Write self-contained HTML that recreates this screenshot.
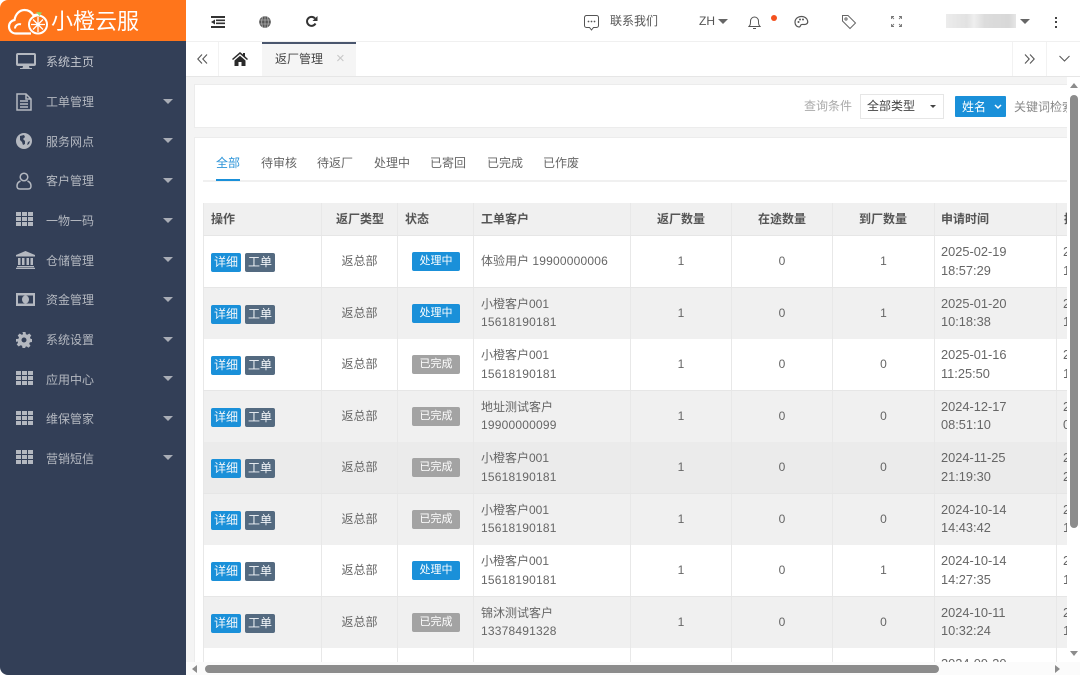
<!DOCTYPE html>
<html lang="zh"><head><meta charset="utf-8"><title>返厂管理</title>
<style>
*{box-sizing:border-box}
html,body{margin:0;padding:0;width:1080px;height:675px;overflow:hidden;background:#fff}
body{position:relative;font-family:"Liberation Sans","Noto Sans CJK SC",sans-serif;font-size:12px;color:#666}
.a{position:absolute}
#side{left:0;top:41px;width:186px;height:634px;background:#333f57;border-bottom-left-radius:8px}
#logo{left:0;top:0;width:186px;height:41px;background:#ff751b;border-top-left-radius:8px}
#logo b{position:absolute;left:51px;top:7px;font-weight:400;font-size:22px;line-height:30px;color:#fff;white-space:nowrap}
.m{position:absolute;left:46px;color:#b4b8c0;font-size:12px;line-height:16px;white-space:nowrap}
.car{position:absolute;left:163px;width:0;height:0;border-left:5px solid transparent;border-right:5px solid transparent;border-top:5px solid #a9adb6}
.ic{position:absolute;left:16px}
.t{position:absolute;white-space:nowrap;line-height:16px}
#main{left:186px;top:77px;width:894px;height:598px;background:#f4f4f4}
.card{position:absolute;background:#fff;border:1px solid #ececec}
.row{position:absolute;left:203px;width:864px;height:52px;border-bottom:1px solid #e6e6e6;overflow:hidden}
.c{position:absolute;top:0;height:100%;border-left:1px solid #e8e8e8}
.c0{left:0;width:118px}.c1{left:118px;width:76px}.c2{left:194px;width:76px}.c3{left:270px;width:157px}
.c4{left:427px;width:101px}.c5{left:528px;width:101px}.c6{left:629px;width:102px}.c7{left:731px;width:122px}.c8{left:853px;width:20px}
.b{position:absolute;height:19px;width:30px;border-radius:2px;color:#f4f7fa;text-align:center;font-size:12px;line-height:18px;top:17px}
.b1{left:7px;background:#1a90d9}.b2{left:41px;background:#546a80}
.s{position:absolute;left:209px;top:16px;width:48px;height:19px;border-radius:2px;color:#fff;text-align:center;font-size:11px;line-height:19px}
.s1{background:#1a90d9}.s2{background:#a3a3a3}
.ct{position:absolute;left:0;width:100%;text-align:center;top:17px;line-height:17px;font-size:12px}
.l2{position:absolute;line-height:18.5px;font-size:12px;top:7px;left:7px;white-space:nowrap}
.n{letter-spacing:.2px}
.tm{font-size:12.8px;left:6px}
.h{font-weight:700;font-size:12px;color:#555;top:8px;left:7px}
.tab{position:absolute;top:155px;font-size:12px;line-height:16px;color:#666;white-space:nowrap}
</style></head><body>

<div class="a" id="main"></div>

<!-- top header -->
<div class="a" style="left:186px;top:0;width:894px;height:42px;background:#fff;border-bottom:1px solid #f0f0f0"></div>
<svg class="a" style="left:211px;top:16px" width="14" height="12" viewBox="0 0 14 12"><path d="M0 0h14v2H0zM5 3.500h9v1.600H5zM5 6.500h9v1.600H5zM0 10h14v2H0zM4 3.500v5L0 6z" fill="#333"/></svg>
<svg class="a" style="left:259px;top:16px" width="12" height="12" viewBox="0 0 12 12"><circle cx="6" cy="6" r="5.800" fill="#555"/><path d="M0 4h12M0 8h12M6 0v12M3.500 1Q2 6 3.500 11M8.500 1Q10 6 8.500 11" stroke="#ccc" stroke-width=".6" fill="none"/></svg>
<svg class="a" style="left:305px;top:15px" width="13" height="13" viewBox="0 0 13 13"><path d="M10.500 8.500A4.500 4.500 0 1 1 10 3.500" fill="none" stroke="#333" stroke-width="2"/><path d="M12.500 1v5h-5z" fill="#333"/></svg>
<svg class="a" style="left:583px;top:14px" width="17" height="17" viewBox="0 0 17 17"><path d="M3.500 1.500h10a2 2 0 0 1 2 2v8a2 2 0 0 1-2 2h-3L8.500 16l-2-2.500h-3a2 2 0 0 1-2-2v-8a2 2 0 0 1 2-2z" fill="none" stroke="#555" stroke-width="1"/><circle cx="5.500" cy="7.500" r=".9" fill="#555"/><circle cx="8.500" cy="7.500" r=".9" fill="#555"/><circle cx="11.500" cy="7.500" r=".9" fill="#555"/></svg>
<div class="t" style="left:610px;top:13px;color:#555">联系我们</div>
<div class="t" style="left:699px;top:13px;color:#555">ZH</div>
<div class="a" style="left:718px;top:19px;border-left:5px solid transparent;border-right:5px solid transparent;border-top:5px solid #666"></div>
<svg class="a" style="left:748px;top:15px" width="13" height="15" viewBox="0 0 13 15"><path d="M1 11.500c1.500-1.500 1.500-3 1.500-5.500a4 4 0 0 1 8 0c0 2.500 0 4 1.500 5.500zM5 13.500h3" fill="none" stroke="#555" stroke-width="1"/></svg>
<div class="a" style="left:771px;top:15px;width:6px;height:6px;border-radius:50%;background:#f4511e"></div>
<svg class="a" style="left:794px;top:15px" width="15" height="14" viewBox="0 0 15 14"><path d="M7.500 1.500C3.500 1.500 1 4.200 1 7.300c0 2.800 2 4.700 4 4.700 1.500 0 1.200-1.500 2-2.200 1-.9 3 .2 5-.6 1.500-.6 2-2 1.500-3.700-.7-2.300-3-4-5.500-4z" fill="none" stroke="#555" stroke-width="1.200"/><circle cx="4.500" cy="7" r="1" fill="#555"/><circle cx="6" cy="4.500" r="1" fill="#555"/><circle cx="9" cy="4.500" r="1" fill="#555"/></svg>
<svg class="a" style="left:841px;top:14px" width="16" height="16" viewBox="0 0 16 16"><path d="M1.500 1.500h5.500l7.500 7.500-5.500 5.500L1.500 7z" fill="none" stroke="#666" stroke-width="1"/><circle cx="5" cy="5" r="1.100" fill="none" stroke="#666"/></svg>
<svg class="a" style="left:891px;top:16px" width="11" height="11" viewBox="0 0 11 11"><path d="M.5 3V.5H3M8 .5h2.500V3M.5 8v2.500H3M8 10.500h2.500V8M1 1l2 2M10 1L8 3M1 10l2-2M10 10L8 8" stroke="#777" stroke-width=".9" fill="none"/></svg>
<div class="a" style="left:946px;top:14px;width:70px;height:14px;background:linear-gradient(90deg,#ececec,#e2e2e2 30%,#efefef 40%,#dcdcdc 55%,#d8d8d8 90%,#e6e6e6)"></div>
<div class="a" style="left:1020px;top:19px;border-left:5px solid transparent;border-right:5px solid transparent;border-top:5px solid #666"></div>
<div class="a" style="left:1055px;top:17px;width:2px;height:2px;background:#444;box-shadow:0 4px 0 #444,0 9px 0 #444"></div>

<!-- tab bar -->
<div class="a" style="left:186px;top:42px;width:894px;height:35px;background:#fff;border-bottom:1px solid #e6e6e6"></div>
<div class="a" style="left:218px;top:42px;width:1px;height:34px;background:#f2f2f2"></div>
<div class="a" style="left:1012px;top:42px;width:1px;height:34px;background:#f2f2f2"></div>
<div class="a" style="left:1046px;top:42px;width:1px;height:34px;background:#f2f2f2"></div>
<svg class="a" style="left:197px;top:54px" width="11" height="10" viewBox="0 0 11 10"><path d="M5 .5L.8 5 5 9.500M10 .5L5.800 5 10 9.500" fill="none" stroke="#555" stroke-width="1.100"/></svg>
<svg class="a" style="left:232px;top:52px" width="16" height="14" viewBox="0 0 16 14"><path d="M8 0L0 7l1 1 7-6 7 6 1-1-3-2.700V1h-2v1.500zM2.500 8.500L8 3.700l5.500 4.800V14H9.500V10h-3v4h-4z" fill="#2b2b2b"/></svg>
<div class="a" style="left:262px;top:42px;width:94px;height:34px;background:#f5f5f5;border-top:2px solid #4a566e"></div>
<div class="t" style="left:275px;top:51px;color:#444">返厂管理</div>
<div class="t" style="left:336px;top:51px;color:#c8c8c8;font-size:15px">×</div>
<svg class="a" style="left:1024px;top:54px" width="11" height="10" viewBox="0 0 11 10"><path d="M1 .5L5.200 5 1 9.500M6 .5L10.200 5 6 9.500" fill="none" stroke="#555" stroke-width="1.100"/></svg>
<svg class="a" style="left:1059px;top:55px" width="11" height="7" viewBox="0 0 11 7"><path d="M.5 1l5 5 5-5" fill="none" stroke="#555" stroke-width="1"/></svg>

<!-- search card -->
<div class="card" style="left:194px;top:84px;width:880px;height:44px"></div>
<div class="t" style="left:804px;top:98px;color:#aaa">查询条件</div>
<div class="a" style="left:860px;top:94px;width:84px;height:25px;background:#fff;border:1px solid #e6e6e6"></div>
<div class="t" style="left:867px;top:98px;color:#444">全部类型</div>
<div class="a" style="left:930px;top:105px;border-left:3.500px solid transparent;border-right:3.500px solid transparent;border-top:3.500px solid #444"></div>
<div class="a" style="left:955px;top:96px;width:51px;height:21px;background:#1a90d9;border-radius:1px"></div>
<div class="t" style="left:962px;top:99px;color:#fff">姓名</div>
<svg class="a" style="left:994px;top:104px" width="8" height="6" viewBox="0 0 8 6"><path d="M1 1l3 3 3-3" fill="none" stroke="#fff" stroke-width="1.500"/></svg>
<div class="t" style="left:1014px;top:99px;color:#888;width:53px;overflow:hidden">关键词检索</div>

<!-- table card -->
<div class="card" style="left:194px;top:137px;width:880px;height:540px"></div>
<div class="tab" style="left:216px;color:#2a93d8">全部</div>
<div class="tab" style="left:261px">待审核</div>
<div class="tab" style="left:317px">待返厂</div>
<div class="tab" style="left:374px">处理中</div>
<div class="tab" style="left:430px">已寄回</div>
<div class="tab" style="left:487px">已完成</div>
<div class="tab" style="left:543px">已作废</div>
<div class="a" style="left:203px;top:180px;width:864px;height:2px;background:#f0f0f0"></div>
<div class="a" style="left:216px;top:179px;width:24px;height:2px;background:#1a90d9"></div>

<!-- table head -->
<div class="row" style="top:203px;height:33px;background:#f0f0f0">
<div class="c c0"><div class="t h">操作</div></div>
<div class="c c1"><div class="t h" style="left:14px">返厂类型</div></div>
<div class="c c2"><div class="t h">状态</div></div>
<div class="c c3"><div class="t h">工单客户</div></div>
<div class="c c4"><div class="t h" style="left:26px">返厂数量</div></div>
<div class="c c5"><div class="t h" style="left:26px">在途数量</div></div>
<div class="c c6"><div class="t h" style="left:26px">到厂数量</div></div>
<div class="c c7"><div class="t h" style="left:6px">申请时间</div></div>
<div class="c c8"><div class="t h">提</div></div>
</div>

<!-- rows -->
<div class="row" style="top:236px;background:#fff"><div class="c c0"><div class="b b1">详细</div><div class="b b2">工单</div></div><div class="c c1"><div class="ct">返总部</div></div><div class="c c2"></div><div class="s s1">处理中</div><div class="c c3"><div class="l2" style="top:17px;line-height:17px">体验用户 <span class="n">19900000006</span></div></div><div class="c c4"><div class="ct">1</div></div><div class="c c5"><div class="ct">0</div></div><div class="c c6"><div class="ct">1</div></div><div class="c c7"><div class="l2 tm">2025-02-19<br>18:57:29</div></div><div class="c c8"><div class="l2 tm">2025<br>18</div></div></div>

<div class="row" style="top:287.500px;background:#f0f0f0"><div class="c c0"><div class="b b1">详细</div><div class="b b2">工单</div></div><div class="c c1"><div class="ct">返总部</div></div><div class="c c2"></div><div class="s s1">处理中</div><div class="c c3"><div class="l2">小橙客户001<br><span class="n">15618190181</span></div></div><div class="c c4"><div class="ct">1</div></div><div class="c c5"><div class="ct">0</div></div><div class="c c6"><div class="ct">1</div></div><div class="c c7"><div class="l2 tm">2025-01-20<br>10:18:38</div></div><div class="c c8"><div class="l2 tm">2025<br>10</div></div></div>

<div class="row" style="top:339px;background:#fff"><div class="c c0"><div class="b b1">详细</div><div class="b b2">工单</div></div><div class="c c1"><div class="ct">返总部</div></div><div class="c c2"></div><div class="s s2">已完成</div><div class="c c3"><div class="l2">小橙客户001<br><span class="n">15618190181</span></div></div><div class="c c4"><div class="ct">1</div></div><div class="c c5"><div class="ct">0</div></div><div class="c c6"><div class="ct">0</div></div><div class="c c7"><div class="l2 tm">2025-01-16<br>11:25:50</div></div><div class="c c8"><div class="l2 tm">2025<br>11</div></div></div>

<div class="row" style="top:390.500px;background:#f0f0f0"><div class="c c0"><div class="b b1">详细</div><div class="b b2">工单</div></div><div class="c c1"><div class="ct">返总部</div></div><div class="c c2"></div><div class="s s2">已完成</div><div class="c c3"><div class="l2">地址测试客户<br><span class="n">19900000099</span></div></div><div class="c c4"><div class="ct">1</div></div><div class="c c5"><div class="ct">0</div></div><div class="c c6"><div class="ct">0</div></div><div class="c c7"><div class="l2 tm">2024-12-17<br>08:51:10</div></div><div class="c c8"><div class="l2 tm">2024<br>08</div></div></div>

<div class="row" style="top:442px;background:#ebebeb"><div class="c c0"><div class="b b1">详细</div><div class="b b2">工单</div></div><div class="c c1"><div class="ct">返总部</div></div><div class="c c2"></div><div class="s s2">已完成</div><div class="c c3"><div class="l2">小橙客户001<br><span class="n">15618190181</span></div></div><div class="c c4"><div class="ct">1</div></div><div class="c c5"><div class="ct">0</div></div><div class="c c6"><div class="ct">0</div></div><div class="c c7"><div class="l2 tm">2024-11-25<br>21:19:30</div></div><div class="c c8"><div class="l2 tm">2024<br>21</div></div></div>

<div class="row" style="top:493.500px;background:#f0f0f0"><div class="c c0"><div class="b b1">详细</div><div class="b b2">工单</div></div><div class="c c1"><div class="ct">返总部</div></div><div class="c c2"></div><div class="s s2">已完成</div><div class="c c3"><div class="l2">小橙客户001<br><span class="n">15618190181</span></div></div><div class="c c4"><div class="ct">1</div></div><div class="c c5"><div class="ct">0</div></div><div class="c c6"><div class="ct">0</div></div><div class="c c7"><div class="l2 tm">2024-10-14<br>14:43:42</div></div><div class="c c8"><div class="l2 tm">2024<br>14</div></div></div>

<div class="row" style="top:545px;background:#fff"><div class="c c0"><div class="b b1">详细</div><div class="b b2">工单</div></div><div class="c c1"><div class="ct">返总部</div></div><div class="c c2"></div><div class="s s1">处理中</div><div class="c c3"><div class="l2">小橙客户001<br><span class="n">15618190181</span></div></div><div class="c c4"><div class="ct">1</div></div><div class="c c5"><div class="ct">0</div></div><div class="c c6"><div class="ct">1</div></div><div class="c c7"><div class="l2 tm">2024-10-14<br>14:27:35</div></div><div class="c c8"><div class="l2 tm">2024<br>14</div></div></div>

<div class="row" style="top:596.500px;background:#f0f0f0"><div class="c c0"><div class="b b1">详细</div><div class="b b2">工单</div></div><div class="c c1"><div class="ct">返总部</div></div><div class="c c2"></div><div class="s s2">已完成</div><div class="c c3"><div class="l2">锦沐测试客户<br><span class="n">13378491328</span></div></div><div class="c c4"><div class="ct">1</div></div><div class="c c5"><div class="ct">0</div></div><div class="c c6"><div class="ct">0</div></div><div class="c c7"><div class="l2 tm">2024-10-11<br>10:32:24</div></div><div class="c c8"><div class="l2 tm">2024<br>10</div></div></div>

<div class="row" style="top:648px;height:16px;background:#fff;border:0"><div class="c c0"></div><div class="c c1"></div><div class="c c2"></div><div class="c c3"></div><div class="c c4"></div><div class="c c5"></div><div class="c c6"></div><div class="c c7"><div class="l2 tm">2024-09-30</div></div><div class="c c8"></div></div>

<!-- scrollbars -->
<div class="a" style="left:1067px;top:77px;width:13px;height:598px;background:#fff"></div>
<div class="a" style="left:186px;top:662px;width:894px;height:13px;background:#fbfbfb"></div>
<div class="a" style="left:1070px;top:95px;width:8px;height:433px;background:#8c8c8c;border-radius:4px"></div>
<div class="a" style="left:1070px;top:83px;border-left:4px solid transparent;border-right:4px solid transparent;border-bottom:5px solid #8c8c8c"></div>
<div class="a" style="left:1070px;top:651px;border-left:4px solid transparent;border-right:4px solid transparent;border-top:5px solid #8c8c8c"></div>
<div class="a" style="left:205px;top:665px;width:734px;height:8px;background:#8c8c8c;border-radius:4px"></div>
<div class="a" style="left:192px;top:665px;border-top:4px solid transparent;border-bottom:4px solid transparent;border-right:5px solid #8c8c8c"></div>
<div class="a" style="left:1055px;top:665px;border-top:4px solid transparent;border-bottom:4px solid transparent;border-left:5px solid #8c8c8c"></div>

<!-- sidebar -->
<div class="a" id="side"></div>
<div class="a" id="logo">
<svg class="a" style="left:7px;top:7px" width="44" height="29" viewBox="0 0 44 29"><path d="M24 26.500H9C4.500 26.500 2 23 2 19.500c0-3.500 2.500-6 5.500-6.500C8.500 7 12.500 3 17.500 3c4 0 7 2 9 5.500 1.500-.8 3-1 5-.5" fill="none" stroke="#fff" stroke-width="2.200"/><path d="M8 21.500c0-3 3-5 6-4.200" fill="none" stroke="#fff" stroke-width="2"/><circle cx="31" cy="17.500" r="9" fill="#ff751b" stroke="#fff" stroke-width="2"/><path d="M31 10v15M24 17.500h14M26 12.500l10 10M36 12.500l-10 10" stroke="#fff" stroke-width="1.300"/><path d="M29 5l6 .5-2.500 3.500z" fill="#8fdc6e"/></svg>
<b>小橙云服</b>
</div>

<svg class="ic" style="top:53px" width="20" height="16" viewBox="0 0 20 16"><path d="M2 0h16a2 2 0 0 1 2 2v9a2 2 0 0 1-2 2h-5l.500 2H16v1H4v-1h2.500L7 13H2a2 2 0 0 1-2-2V2a2 2 0 0 1 2-2zm0 2v8.500h16V2z" fill="#b4b8c0"/></svg>
<div class="m" style="top:54px;color:#c4c7ce">系统主页</div>

<svg class="ic" style="top:93px" width="16" height="18" viewBox="0 0 16 18"><path d="M1 1h9l5 5v11H1zM10 1v5h5M4 8h8M4 11h8M4 14h8" fill="none" stroke="#b4b8c0" stroke-width="1.500"/></svg>
<div class="m" style="top:94px">工单管理</div><div class="car" style="top:99px"></div>

<svg class="ic" style="top:133px" width="16" height="16" viewBox="0 0 16 16"><circle cx="8" cy="8" r="8" fill="#b4b8c0"/><path d="M4 3l4-1 1 2-2 2 2 2v3l-2 1-1-3-2-2zM12 9l2-1-1 3-2 1z" fill="#333f57"/></svg>
<div class="m" style="top:134px">服务网点</div><div class="car" style="top:138px"></div>

<svg class="ic" style="top:172px" width="16" height="18" viewBox="0 0 16 18"><circle cx="8" cy="5" r="3.800" fill="none" stroke="#b4b8c0" stroke-width="1.500"/><path d="M4.500 9C2 10 1 12 1 14c0 2 1 3 3 3h8c2 0 3-1 3-3 0-2-1-4-3.500-5" fill="none" stroke="#b4b8c0" stroke-width="1.500"/></svg>
<div class="m" style="top:173px">客户管理</div><div class="car" style="top:178px"></div>

<svg class="ic" style="top:212px" width="17" height="14" viewBox="0 0 17 14" fill="#b4b8c0"><path d="M0 0h5v4H0zM6 0h5v4H6zM12 0h5v4h-5zM0 5h5v4H0zM6 5h5v4H6zM12 5h5v4h-5zM0 10h5v4H0zM6 10h5v4H6zM12 10h5v4h-5z"/></svg>
<div class="m" style="top:213px">一物一码</div><div class="car" style="top:218px"></div>

<svg class="ic" style="top:251px" width="19" height="18" viewBox="0 0 19 18" fill="#b4b8c0"><path d="M9.500 0L19 4v1.500H0V4zM2 7h2.500v7H2zM6 7h2.500v7H6zM10.500 7H13v7h-2.500zM14.500 7H17v7h-2.500zM1 15h17v1.200H1zM0 16.800h19V18H0z"/></svg>
<div class="m" style="top:253px">仓储管理</div><div class="car" style="top:257px"></div>

<svg class="ic" style="top:293px" width="19" height="13" viewBox="0 0 19 13"><path d="M0 0h19v13H0z" fill="#b4b8c0"/><path d="M2 2.500h15v8H2z" fill="#333f57"/><ellipse cx="9.500" cy="6.500" rx="3.500" ry="4" fill="#b4b8c0"/></svg>
<div class="m" style="top:292px">资金管理</div><div class="car" style="top:297px"></div>

<svg class="ic" style="top:332px" width="16" height="16" viewBox="0 0 16 16"><path d="M6.500 0h3l.4 2.200 1.500.6L13.300 1.500l2 2-1.300 1.900.6 1.500L16 7v3l-2.200.4-.6 1.500 1.300 1.800-2 2-1.900-1.300-1.500.6L9.500 16h-3l-.4-2.200-1.500-.6-1.900 1.300-2-2 1.300-1.800-.6-1.500L0 10V7l2.400-.1.600-1.500L1.700 3.500l2-2 1.900 1.300 1.500-.6z" fill="#b4b8c0"/><circle cx="8" cy="8" r="2.500" fill="#333f57"/></svg>
<div class="m" style="top:332px">系统设置</div><div class="car" style="top:337px"></div>

<svg class="ic" style="top:371px" width="17" height="14" viewBox="0 0 17 14" fill="#b4b8c0"><path d="M0 0h5v4H0zM6 0h5v4H6zM12 0h5v4h-5zM0 5h5v4H0zM6 5h5v4H6zM12 5h5v4h-5zM0 10h5v4H0zM6 10h5v4H6zM12 10h5v4h-5z"/></svg>
<div class="m" style="top:372px">应用中心</div><div class="car" style="top:376px"></div>

<svg class="ic" style="top:411px" width="17" height="14" viewBox="0 0 17 14" fill="#b4b8c0"><path d="M0 0h5v4H0zM6 0h5v4H6zM12 0h5v4h-5zM0 5h5v4H0zM6 5h5v4H6zM12 5h5v4h-5zM0 10h5v4H0zM6 10h5v4H6zM12 10h5v4h-5z"/></svg>
<div class="m" style="top:411px">维保管家</div><div class="car" style="top:416px"></div>

<svg class="ic" style="top:450px" width="17" height="14" viewBox="0 0 17 14" fill="#b4b8c0"><path d="M0 0h5v4H0zM6 0h5v4H6zM12 0h5v4h-5zM0 5h5v4H0zM6 5h5v4H6zM12 5h5v4h-5zM0 10h5v4H0zM6 10h5v4H6zM12 10h5v4h-5z"/></svg>
<div class="m" style="top:451px">营销短信</div><div class="car" style="top:455px"></div>

</body></html>
